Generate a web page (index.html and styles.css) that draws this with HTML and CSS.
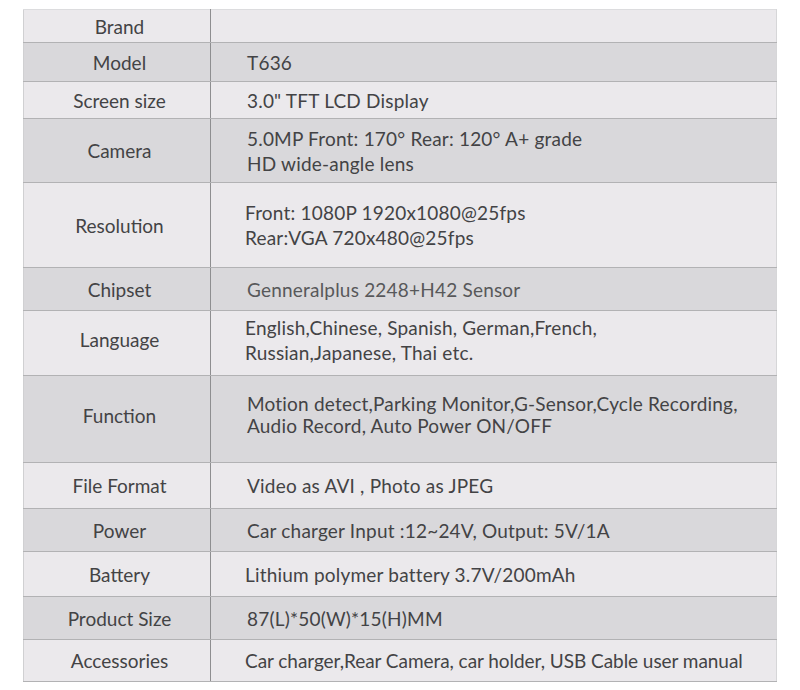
FILE: index.html
```html
<!DOCTYPE html>
<html>
<head>
<meta charset="utf-8">
<link rel="stylesheet" href="styles.css">
</head>
<body>
<div class="wrap">
<table class="spec">
<tr class="light h33"><td class="k">Brand</td><td class="v"></td></tr>
<tr class="dark h39"><td class="k">Model</td><td class="v">T636</td></tr>
<tr class="light h37"><td class="k">Screen size</td><td class="v">3.0" TFT LCD Display</td></tr>
<tr class="dark h64"><td class="k">Camera</td><td class="v">5.0MP Front: 170° Rear: 120° A+ grade<br>HD wide-angle lens</td></tr>
<tr class="light h85"><td class="k">Resolution</td><td class="v in">Front: 1080P 1920x1080@25fps<br>Rear:VGA 720x480@25fps</td></tr>
<tr class="dark h43"><td class="k">Chipset</td><td class="v soft">Genneralplus 2248+H42 Sensor</td></tr>
<tr class="light h65"><td class="k up">Language</td><td class="v in up">English,Chinese, Spanish, German,French,<br>Russian,Japanese, Thai etc.</td></tr>
<tr class="dark h87"><td class="k up">Function</td><td class="v tight">Motion detect,Parking Monitor,G-Sensor,Cycle Recording,<br>Audio Record, Auto Power ON/OFF</td></tr>
<tr class="light h46"><td class="k">File Format</td><td class="v">Video as AVI , Photo as JPEG</td></tr>
<tr class="dark h43"><td class="k">Power</td><td class="v">Car charger Input :12~24V, Output: 5V/1A</td></tr>
<tr class="light h45"><td class="k">Battery</td><td class="v in">Lithium polymer battery 3.7V/200mAh</td></tr>
<tr class="dark h43"><td class="k">Product Size</td><td class="v">87(L)*50(W)*15(H)MM</td></tr>
<tr class="light h42"><td class="k">Accessories</td><td class="v in narrow">Car charger,Rear Camera, car holder, USB Cable user manual</td></tr>
</table>
</div>
</body>
</html>
```
FILE: styles.css
```css
html, body {
  margin: 0;
  padding: 0;
  background: #ffffff;
}
.wrap {
  padding: 9px 0 0 23px;
}
.spec {
  border-collapse: collapse;
  width: 754px;
  table-layout: fixed;
  font-family: "Lato", "Open Sans", sans-serif;
  font-size: 19px;
  color: #434345;
}
.spec td {
  padding: 0;
  border-top: 1px solid #b2b2b4;
  border-bottom: 1px solid #b2b2b4;
  vertical-align: middle;
}
.spec tr:first-child td {
  border-top: 1px solid #dcdcde;
}
.spec .k {
  width: 181px;
  text-align: center;
  padding-left: 5px;
  border-left: 1px solid #d0d0d2;
  border-right: 1px solid #8e8e90;
}
.spec .v {
  padding-left: 36px;
  border-right: 1px solid #d6d6d8;
  line-height: 25px;
  letter-spacing: 0.2px;
}
.spec .in {
  padding-left: 34px;
}
.spec .narrow {
  letter-spacing: -0.05px;
}
.spec .up {
  padding-bottom: 7px;
}
.spec .tight {
  line-height: 22px;
  padding-bottom: 8px;
}
.spec .soft {
  color: #58585a;
}
.light td { background: #ebe9ec; }
.dark td { background: #d9d8db; }
.h33 { height: 33px; }
.h37 { height: 37px; }
.h39 { height: 39px; }
.h42 { height: 42px; }
.h43 { height: 43px; }
.h45 { height: 45px; }
.h46 { height: 46px; }
.h64 { height: 64px; }
.h65 { height: 65px; }
.h85 { height: 85px; }
.h87 { height: 87px; }
```
